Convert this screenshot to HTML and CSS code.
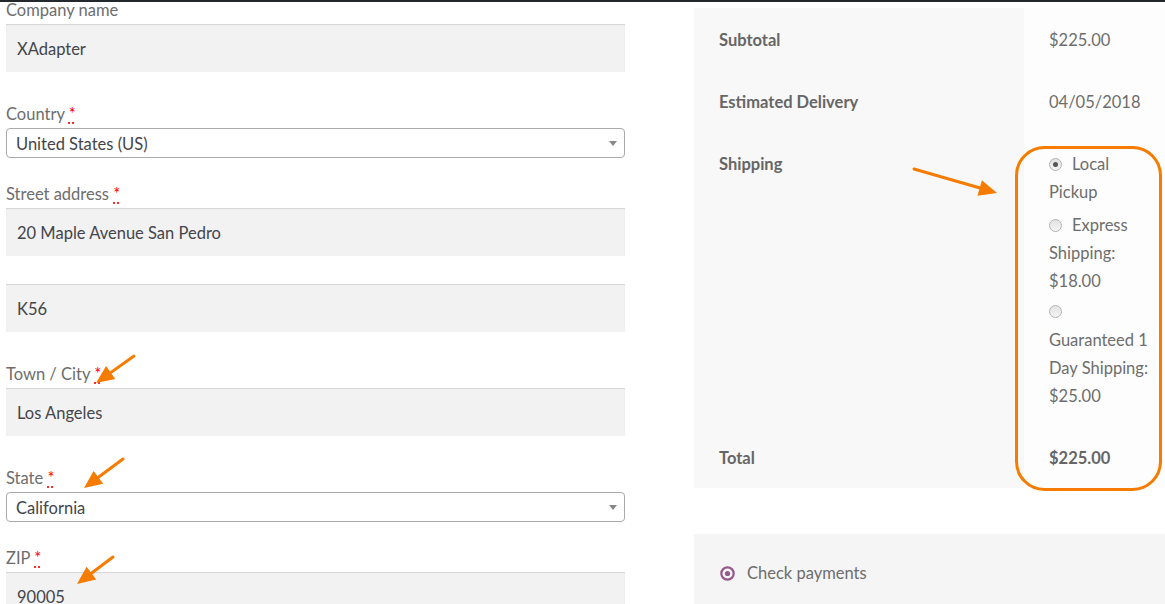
FILE: index.html
```html
<!DOCTYPE html>
<html lang="en">
<head>
<meta charset="utf-8">
<title>Checkout</title>
<link rel="stylesheet" href="styles.css">
</head>
<body>
<div class="topbar"></div>
<div class="page">
  <form class="billing">
    <div class="field">
      <label class="lbl">Company name</label>
      <input class="text" type="text" value="XAdapter" readonly>
    </div>
    <div class="field">
      <label class="lbl">Country <abbr class="required" title="required">*</abbr></label>
      <div class="select"><span class="sel-text">United States (US)</span><span class="sel-arrow"></span></div>
    </div>
    <div class="field">
      <label class="lbl">Street address <abbr class="required" title="required">*</abbr></label>
      <input class="text" type="text" value="20 Maple Avenue San Pedro" readonly>
    </div>
    <div class="field">
      <input class="text" type="text" value="K56" readonly>
    </div>
    <div class="field">
      <label class="lbl">Town / City <abbr class="required" title="required">*</abbr></label>
      <input class="text" type="text" value="Los Angeles" readonly>
    </div>
    <div class="field">
      <label class="lbl">State <abbr class="required" title="required">*</abbr></label>
      <div class="select"><span class="sel-text">California</span><span class="sel-arrow"></span></div>
    </div>
    <div class="field">
      <label class="lbl">ZIP <abbr class="required" title="required">*</abbr></label>
      <input class="text" type="text" value="90005" readonly>
    </div>
  </form>

  <aside class="review">
    <table class="totals">
      <tr>
        <th>Subtotal</th>
        <td>$225.00</td>
      </tr>
      <tr>
        <th>Estimated Delivery</th>
        <td>04/05/2018</td>
      </tr>
      <tr class="ship-row">
        <th>Shipping</th>
        <td>
          <ul class="methods">
            <li class="m-local"><span class="radio checked"></span>Local<br>Pickup</li>
            <li class="m-express"><span class="radio"></span>Express<br>Shipping:<br>$18.00</li>
            <li class="m-guar"><span class="radio-line"><span class="radio"></span></span>Guaranteed 1<br>Day Shipping:<br>$25.00</li>
          </ul>
        </td>
      </tr>
      <tr class="total-row">
        <th>Total</th>
        <td><strong>$225.00</strong></td>
      </tr>
    </table>

    <div class="payment">
      <div class="pay-method">
        <svg class="pay-radio" width="15" height="15" viewBox="0 0 15 15" aria-hidden="true">
          <circle cx="7.5" cy="7.5" r="6.2" fill="none" stroke="#96588a" stroke-width="2.2"/>
          <circle cx="7.5" cy="7.5" r="2.6" fill="#96588a"/>
        </svg>
        <span>Check payments</span>
      </div>
    </div>
  </aside>
</div>

<svg class="annot" width="1165" height="604" viewBox="0 0 1165 604" aria-hidden="true">
  <rect x="1016.5" y="147.5" width="144" height="342" rx="28" ry="28" fill="none" stroke="#f57c00" stroke-width="3"/>
  <g stroke="#f57c00" stroke-width="3" stroke-linecap="round" fill="#f57c00">
    <line x1="914" y1="169" x2="980" y2="188"/>
    <polygon stroke="none" points="997,193 977.5,195.7 981.9,180.3"/>
    <line x1="134" y1="356" x2="110.7" y2="372.6"/>
    <polygon stroke="none" points="96,383 106.1,366.1 115.3,379.1"/>
    <line x1="123" y1="459" x2="98.4" y2="477.3"/>
    <polygon stroke="none" points="84,488 93.6,470.9 103.2,483.7"/>
    <line x1="113" y1="557" x2="91.4" y2="573.2"/>
    <polygon stroke="none" points="77,584 86.6,566.8 96.2,579.6"/>
  </g>
</svg>
</body>
</html>
```

FILE: styles.css
```css
* { box-sizing: border-box; }

html, body {
  margin: 0;
  padding: 0;
  background: #ffffff;
  overflow: hidden;
}

body {
  position: relative;
  width: 1165px;
  height: 604px;
  font-family: Lato, "Open Sans", "Liberation Sans", sans-serif;
  font-size: 16.5px;
  color: #6d6d6d;
}

.topbar {
  position: absolute;
  top: 0;
  left: 0;
  width: 100%;
  height: 2px;
  background: #23282d;
  z-index: 3;
}

.page {
  display: flex;
  align-items: flex-start;
  gap: 69px;
  height: 604px;
  overflow: hidden;
  padding-left: 6px;
}

/* ---------- billing form ---------- */
.billing {
  width: 619px;
  margin: -4px 0 0 0;
}

.field {
  margin-bottom: 28px;
}

.field:has(.select) {
  margin-bottom: 22px;
}

.field:last-child {
  margin-bottom: 0;
}

.lbl {
  display: block;
  line-height: 26px;
  padding-top: 1px;
  margin-bottom: 1px;
  color: #6d6d6d;
}

.required {
  color: #ff0000;
  text-decoration: underline dotted #ff0000;
  text-underline-offset: 3px;
  cursor: help;
}

.text {
  display: block;
  width: 100%;
  height: 48px;
  padding: 2px 11px 0 11px;
  border: 0;
  margin: 0;
  background: #f2f2f2;
  box-shadow: inset 0 1px 1px rgba(0, 0, 0, 0.125);
  font-family: inherit;
  font-size: 16.5px;
  color: #43454b;
  outline: none;
}

.select {
  display: flex;
  align-items: center;
  justify-content: space-between;
  height: 30px;
  padding: 2px 7px 0 9px;
  border: 1px solid #aaaaaa;
  border-radius: 4px;
  background: #ffffff;
  color: #43454b;
}

.sel-arrow {
  width: 0;
  height: 0;
  margin-bottom: 2px;
  border-left: 4px solid transparent;
  border-right: 4px solid transparent;
  border-top: 5px solid #888888;
}

/* ---------- order review ---------- */
.review {
  width: 471px;
  padding-top: 8px;
}

.totals {
  width: 100%;
  border-collapse: collapse;
  border-spacing: 0;
}

.totals th,
.totals td {
  padding: 19px 12px 17px 25px;
  line-height: 26px;
  vertical-align: top;
  text-align: left;
}

.totals th {
  width: 330px;
  background: #f8f8f8;
  font-weight: 700;
  color: #666666;
}

.totals td {
  background: #fdfdfd;
  color: #6d6d6d;
}

.total-row td strong {
  font-weight: 700;
  color: #666666;
}

.ship-row td {
  padding-top: 18px;
  padding-bottom: 16px;
}

.methods {
  list-style: none;
  margin: 0;
  padding: 0;
}

.methods li {
  display: block;
  line-height: 28px;
}

.m-local { margin-bottom: 5px; }
.m-express { margin-bottom: 1px; }

.radio-line {
  display: flex;
  align-items: center;
  height: 30px;
}

.radio {
  position: relative;
  display: inline-block;
  vertical-align: -1px;
  width: 13px;
  height: 13px;
  margin-right: 10px;
  border-radius: 50%;
  border: 1px solid #b4b4b4;
  background: linear-gradient(#e2e2e2, #f4f4f4);
}

.radio.checked::after {
  content: "";
  position: absolute;
  left: 3px;
  top: 3px;
  width: 5px;
  height: 5px;
  border-radius: 50%;
  background: #555555;
}

/* ---------- payment ---------- */
.payment {
  margin-top: 46px;
  height: 70px;
  background: #f5f5f5;
  padding: 26px 25px 0 25px;
}

.pay-method {
  display: flex;
  align-items: center;
  gap: 12px;
  line-height: 26px;
  color: #6d6d6d;
}

.pay-radio {
  flex: none;
  margin-left: 1px;
}

/* ---------- annotation overlay ---------- */
.annot {
  position: absolute;
  top: 0;
  left: 0;
  pointer-events: none;
  z-index: 4;
}
```
